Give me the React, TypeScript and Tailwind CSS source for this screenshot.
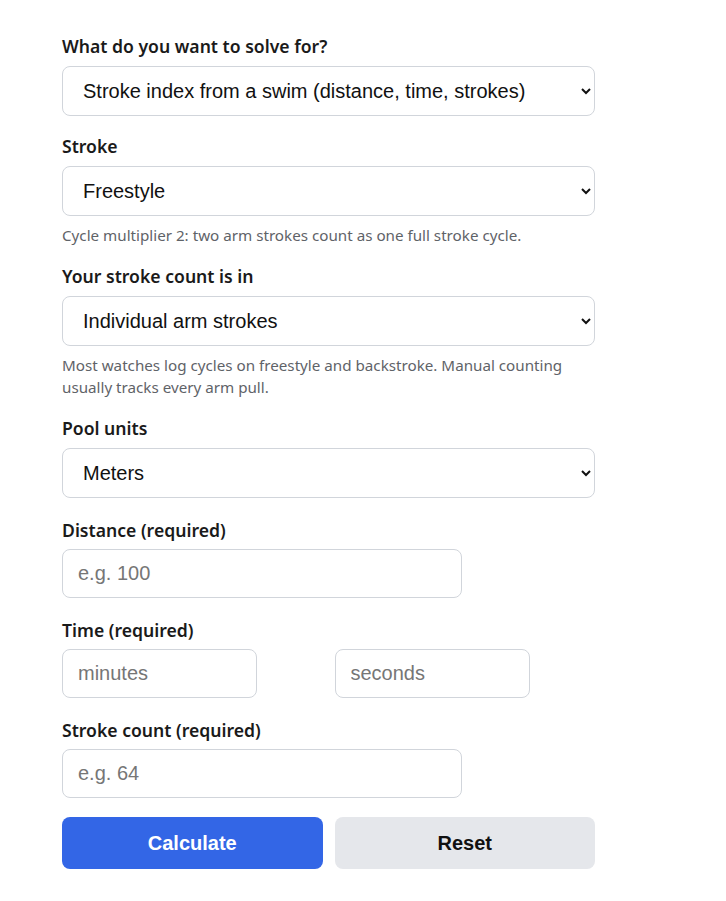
import { useState } from "react";

const labelCls = "block mb-2 text-[17.6px] leading-6 font-semibold text-[#1a1a1a] font-['Noto_Sans',sans-serif]";
const fieldLabelCls = "block mb-[7px] text-[17.6px] leading-6 font-semibold text-[#1a1a1a] font-['Noto_Sans',sans-serif]";
const selectCls =
    "w-full h-[50px] rounded-lg border border-[#d1d5db] bg-white pl-4 pr-2 text-[20px] text-[#111] font-['Liberation_Sans',Arial,sans-serif]";
const inputCls =
    "h-[49px] rounded-lg border border-[#d1d5db] bg-white pl-[15px] pr-4 text-[20px] text-[#111] placeholder:text-[#767676] font-['Liberation_Sans',Arial,sans-serif]";
const helpCls = "mt-2 text-[15.2px] leading-[22px] text-[#5f6368] font-['Noto_Sans',sans-serif]";

export default function App() {
    const [mode, setMode] = useState("index");
    const [stroke, setStroke] = useState("free");
    const [countIn, setCountIn] = useState("arm");
    const [units, setUnits] = useState("m");
    const [distance, setDistance] = useState("");
    const [minutes, setMinutes] = useState("");
    const [seconds, setSeconds] = useState("");
    const [count, setCount] = useState("");

    const reset = () => {
        setDistance("");
        setMinutes("");
        setSeconds("");
        setCount("");
    };

    return (
        <div className="min-h-screen bg-white">
            <form
                className="w-[533px] ml-[62px] pt-[34px] pb-8 flex flex-col gap-[18px]"
                onSubmit={(e) => e.preventDefault()}
            >
                {/* what to solve */}
                <div>
                    <label className={labelCls}>What do you want to solve for?</label>
                    <select className={selectCls} value={mode} onChange={(e) => setMode(e.target.value)}>
                        <option value="index">Stroke index from a swim (distance, time, strokes)</option>
                        <option value="count">Stroke count for a target index</option>
                    </select>
                </div>

                <div>
                    <label className={labelCls}>Stroke</label>
                    <select className={selectCls} value={stroke} onChange={(e) => setStroke(e.target.value)}>
                        <option value="free">Freestyle</option>
                        <option value="back">Backstroke</option>
                        <option value="breast">Breaststroke</option>
                        <option value="fly">Butterfly</option>
                    </select>
                    <p className={helpCls}>Cycle multiplier 2: two arm strokes count as one full stroke cycle.</p>
                </div>

                <div>
                    <label className={labelCls}>Your stroke count is in</label>
                    <select className={selectCls} value={countIn} onChange={(e) => setCountIn(e.target.value)}>
                        <option value="arm">Individual arm strokes</option>
                        <option value="cycle">Stroke cycles</option>
                    </select>
                    <p className={helpCls}>
                        Most watches log cycles on freestyle and backstroke. Manual counting usually tracks every arm pull.
                    </p>
                </div>

                <div>
                    <label className={labelCls}>Pool units</label>
                    <select className={selectCls} value={units} onChange={(e) => setUnits(e.target.value)}>
                        <option value="m">Meters</option>
                        <option value="y">Yards</option>
                    </select>
                </div>

                {/* swim inputs */}
                <div className="mt-[2px]">
                    <label className={fieldLabelCls}>Distance (required)</label>
                    <input
                        className={`${inputCls} w-3/4`}
                        placeholder="e.g. 100"
                        value={distance}
                        onChange={(e) => setDistance(e.target.value)}
                    />
                </div>

                <div className="mt-[2px]">
                    <label className={fieldLabelCls}>Time (required)</label>
                    <div className="grid grid-cols-2 gap-3">
                        <input
                            className={`${inputCls} w-3/4`}
                            placeholder="minutes"
                            value={minutes}
                            onChange={(e) => setMinutes(e.target.value)}
                        />
                        <input
                            className={`${inputCls} w-3/4`}
                            placeholder="seconds"
                            value={seconds}
                            onChange={(e) => setSeconds(e.target.value)}
                        />
                    </div>
                </div>

                <div className="mt-[2px]">
                    <label className={fieldLabelCls}>Stroke count (required)</label>
                    <input
                        className={`${inputCls} w-3/4`}
                        placeholder="e.g. 64"
                        value={count}
                        onChange={(e) => setCount(e.target.value)}
                    />
                </div>

                <div className="grid grid-cols-2 gap-3 mt-[1px]">
                    <button
                        type="submit"
                        className="h-[52px] rounded-lg bg-[#3366e6] text-white text-[20px] font-bold font-['Liberation_Sans',Arial,sans-serif]"
                    >
                        Calculate
                    </button>
                    <button
                        type="button"
                        onClick={reset}
                        className="h-[52px] rounded-lg bg-[#e5e7eb] text-[#111] text-[20px] font-bold font-['Liberation_Sans',Arial,sans-serif]"
                    >
                        Reset
                    </button>
                </div>
            </form>
        </div>
    );
}
